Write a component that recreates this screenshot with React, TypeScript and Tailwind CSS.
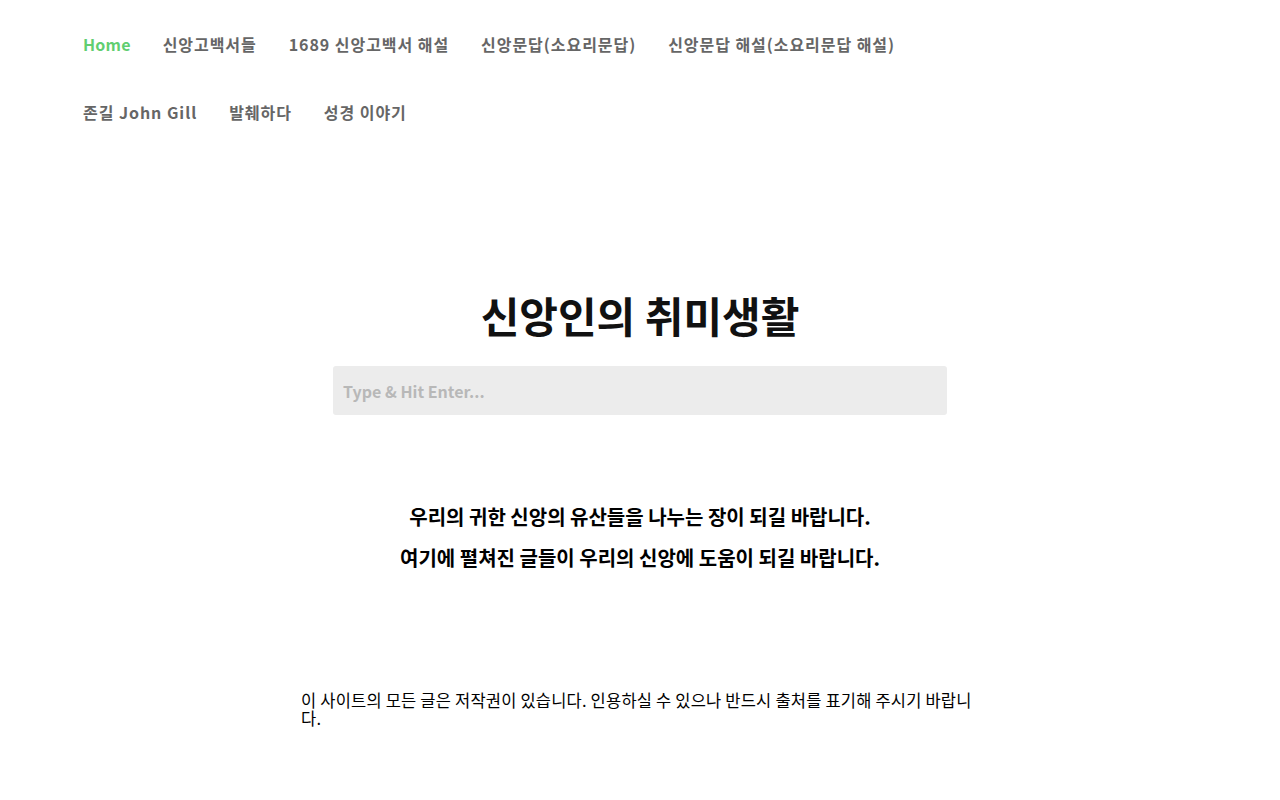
import React from "react";

const navItems = [
  { label: "Home", active: true },
  { label: "신앙고백서들" },
  { label: "1689 신앙고백서 해설" },
  { label: "신앙문답(소요리문답)" },
  { label: "신앙문답 해설(소요리문답 해설)" },
  { label: "존길 John Gill" },
  { label: "발췌하다" },
  { label: "성경 이야기" },
];

export default function App() {
  return (
    <div
      className="min-h-[800px] bg-white text-[#111]"
      style={{ fontFamily: '"Noto Sans CJK KR", "Noto Sans", sans-serif' }}
    >
      <nav className="flex w-[1000px] flex-wrap gap-x-[32px] pl-[83px] pt-[10px]">
        {navItems.map((item) => (
          <a
            key={item.label}
            href="#"
            className={`flex h-[68px] items-center text-[16px] font-bold ${item.active ? "tracking-[0.2px] text-[#61ce70]" : "tracking-[0.95px] text-[#666]"}`}
          >
            {item.label}
          </a>
        ))}
      </nav>

      <main className="flex flex-col items-center pt-[143px]">
        <h1 className="text-[42px] font-bold leading-[52px] text-[#111]">신앙인의 취미생활</h1>
        <form className="mt-[25px] w-[614px]" onSubmit={(e) => e.preventDefault()}>
          <input
            placeholder="Type & Hit Enter..."
            className="h-[49px] w-full rounded-[3px] bg-[#ececec] px-[10px] text-[16px] font-bold text-[#333] outline-none placeholder:text-[#b8b8b8]"
          />
        </form>

        <div className="mt-[88px] flex flex-col items-center gap-[14px] text-[20px] font-bold leading-[27px] text-black">
          <p>우리의 귀한 신앙의 유산들을 나누는 장이 되길 바랍니다.</p>
          <p>여기에 펼쳐진 글들이 우리의 신앙에 도움이 되길 바랍니다.</p>
        </div>
      </main>

      <footer className="ml-[301px] mt-[120px] w-[678px] break-all pb-[70px] text-[16.5px] font-normal leading-[18px] tracking-[0.2px] text-black">
        이 사이트의 모든 글은 저작권이 있습니다. 인용하실 수 있으나 반드시 출처를 표기해 주시기 바랍니다.
      </footer>
    </div>
  );
}
